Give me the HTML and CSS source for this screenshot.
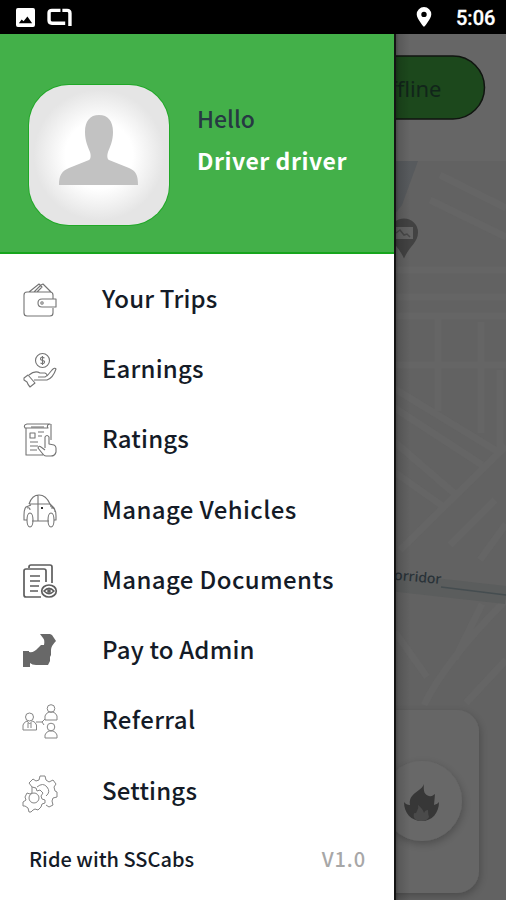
FILE: index.html
```html
<!DOCTYPE html>
<html lang="en">
<head>
<meta charset="utf-8">
<title>SSCabs</title>
<link rel="stylesheet" href="styles.css">
</head>
<body>
<header class="status">
  <svg class="photo" viewBox="0 0 20 20"><path fill="#fff" fill-rule="evenodd" d="M2 0h16q2 0 2 2v16q0 2-2 2H2q-2 0-2-2V2Q0 0 2 0ZM3 16h14l-5-7-4 5-2-2Z"/></svg>
  <svg class="cast" viewBox="0 0 26 20"><path fill="none" stroke="#fff" stroke-width="3.6" d="M14 2.500H5Q2 2.500 2 5v8q0 3 3 3h14M16 2.500h5q3 0 3 3V19"/></svg>
  <svg class="pin" viewBox="0 0 16 20"><path fill="#fff" fill-rule="evenodd" d="M8 0a7.3 7.3 0 0 1 7.3 7.3C15.3 12 8 20 8 20S.7 12 .7 7.3A7.3 7.3 0 0 1 8 0Zm0 4.7a2.7 2.7 0 1 0 0 5.4 2.7 2.7 0 0 0 0-5.4Z"/></svg>
  <time class="time">5:06</time>
</header>
<main class="screen">
  <svg class="map" viewBox="0 34 506 866">
    <defs>
      <filter id="soft" x="-30%" y="-30%" width="160%" height="160%"><feDropShadow dx="1" dy="3" stdDeviation="4" flood-opacity=".25"/></filter>
      <linearGradient id="edge"><stop stop-opacity=".4"/><stop offset=".3" stop-opacity=".13"/><stop offset="1" stop-opacity="0"/></linearGradient>
    </defs>
    <path fill="#626262" d="M390 34h116v866H390Z"/>
    <path fill="#666" d="M390 34h116v127H390Z"/>
    <path fill="#575a5d" d="M390 161h28l-16 44-12 15Z"/>
    <g fill="none" stroke="#656565" stroke-width="7">
      <path d="M390 270h116M390 297h116M390 316h116M390 365h116M438 316v95M481 322v111M500 370v80M440 175l66 33M430 200l76 37M390 386l110 67M390 405l92 60M390 438l65 56M390 469l54 38M400 550l106-104M480 560l26-36M506 600q-60 60-82 105M506 660l-40 43M395 632l32 45M482 604l-27 55M450 545l45-45"/>
    </g>
    <path fill="none" stroke="#5b5d5d" stroke-width="18" d="M390 582l116 13"/>
    <path fill="none" stroke="#454d50" stroke-width="1.3" d="M441 587l65 8"/>
    <text class="road" transform="translate(385 579) rotate(5)">Corridor</text>
    <rect x="280" y="56" width="204.500" height="63" rx="31.500" fill="#1c481c" stroke="#101510" stroke-width="1.500"/>
    <text class="offline" x="372" y="97" textLength="69.500">Offline</text>
    <path fill="#424242" d="M404 218.500a14 14 0 0 1 14 14c0 10-9 14-14 26-5-12-14-16-14-26a14 14 0 0 1 14-14Z"/>
    <path fill="#636363" d="M392 227h21v12h-21Z"/><path fill="none" stroke="#484848" stroke-width="1.500" d="M396 233l4-3 4 5 3-1 3 3"/>
    <rect x="330" y="710" width="149" height="183" rx="22" fill="#666" filter="url(#soft)"/>
    <circle cx="422" cy="801" r="40" fill="#686868" filter="url(#soft)"/>
    <path fill="#373737" d="M424 784c-1 8 1 11 5 12 3 1 4-1 6-2l-1 11q4-1 5-3c0 11-7 19-17 19-11 0-18-8-18-19q2 3 6 3c-2-12 11-13 14-21Z"/>
    <path fill="#4a4a4a" d="M422 821q-10 0-8-8 2 1 3-2 2-3 1-6 5 4 6 8 1-3 4-3 0 4 1 7-2 4-7 4Z"/>
    <rect x="394" y="34" width="16" height="866" fill="url(#edge)"/>
    <path fill="#141414" d="M394 34h2v866h-2Z"/>
  </svg>
  <aside class="drawer">
    <section class="profile">
      <div class="avatar">
        <svg viewBox="0 0 80 70"><path fill="#c2c2c2" d="M40 0c9 0 14 6 14 17 0 9-3 15-5 20-1 3-1 7 1 8l20 8c7 3 9 7 9 17H0c0-10 3-14 10-17l20-8c2-1 2-5 1-8-2-5-5-11-5-20C26 6 31 0 40 0Z"/></svg>
      </div>
      <div class="who"><div class="hello"><span>Hello</span></div><div class="name"><span>Driver driver</span></div></div>
    </section>
    <nav class="menu">
      <a class="item"><svg viewBox="0 0 34 34"><path d="M30 16v-4q0-3-3-3H4q-3 0-3 3v18q0 3 3 3h23q3 0 3-3v-5M6 9 16 1l3 3-5 5M11 9l7-7 2-1 8 8M19 16h14v8H19q-4 0-4-4t4-4Z"/><circle cx="19" cy="20" r="1.200"/></svg><span>Your Trips</span></a>
      <a class="item"><svg viewBox="0 0 34 34"><circle cx="19.500" cy="7.500" r="7"/><path d="M21.500 5q-4-2-4 1 0 1 2 1.500 2.500.5 2 2-1 2-4 .5M19.500 3v9M1 25l4-3 7 8-5 4q-2-2-3-5l-3-2ZM6 22q6-5 11-2h5q4 2 0 4h-7M24 23l5-6q3-3 4-1-3 9-9 11H11"/></svg><span>Earnings</span></a>
      <a class="item"><svg viewBox="0 0 34 34"><path d="M5 5H2Q0 2 4 1h23q-4 1-2 4H5M3 5v27h17M28 1v16M7 10h5v5H7ZM15 9h6M15 13h4M7 19h8M7 23h8M7 27h7M22 25V14q2-3 4 0v7l5 1q2 1 2 3v4q-1 4-5 4h-5q-2 0-4-3l-4-5q1-3 3-1l4 3"/><path d="M8 4h13"/></svg><span>Ratings</span></a>
      <a class="item wide"><svg viewBox="0 0 34 34"><path d="M6 10q3-9 10-9t11 9l4 4q2 3 2 8v4h-2M15 1v26M6 10h20q2 0 2 3M8 11l-5 2q-2 2-2 8v5h3M9 27h17M4 14q3-1 3 2M28 14q4-1 4 4"/><ellipse cx="7" cy="26" rx="3" ry="7"/><ellipse cx="28" cy="26" rx="3" ry="7"/><path class="dot" d="M18 14h2"/></svg><span>Manage Vehicles</span></a>
      <a class="item strong wide"><svg viewBox="0 0 34 34"><path d="M6 4V3q0-2 2-2h19q2 0 2 2v16M18 33H3q-2 0-2-2V7q0-2 2-2h18q2 0 2 2v11M7 12h10M7 17h10M7 22h9M7 27h8"/><ellipse cx="26" cy="27" rx="7.300" ry="6"/><path d="M21 27q5-5 10 0-5 5-10 0Z"/><circle cx="26" cy="27" r="1"/></svg><span>Manage Documents</span></a>
      <a class="item solid"><svg viewBox="0 0 34 34"><path d="M17 0h10l2 1 4 6q-5 5-5 9v5l-1 2v4l-1 2-1 2H13q-4 0-6-2v4H0V17h6v1q5 1 9-4l3-3h3q1-5-1-7Z"/></svg><span>Pay to Admin</span></a>
      <a class="item thin wide"><svg viewBox="0 0 34 34"><circle cx="6.500" cy="13" r="4"/><path d="M0 26v-5q1-3 4-4l2.500 3 3-3q3 1 4 4v5Zm5-7v5m3-5v5"/><circle cx="28" cy="4.500" r="3.800"/><path d="M22 16v-4q1-3 4-4h4q3 1 4 4v4Z"/><circle cx="28" cy="23" r="3.800"/><path d="M22 34v-3q1-3 4-4h4q3 1 4 4v3ZM13 18h6l3-3M19 18l2 3"/></svg><span>Referral</span></a>
      <a class="item thin"><svg viewBox="0 0 34 34"><path d="m6 8 4-4 3 2 3-1 1-4h5l1 4 3 2 4-2 3 4-2 3 1 4 2 1v5l-4 1-1 3 1 4-4 2-3-2M6 8l3 4M14 12q6-5 10 0 4 5-1 9"/><path d="m9 12 4 1 1 3 3-1 3 3-2 3 1 3 3 1v3l-3 1-1 3-3 3-3-1-2 1-2 2H6l-1-4-3-2-2 0v-4l3-2-1-3 2-4 3 1 2-1Z"/><circle cx="11" cy="23" r="5"/></svg><span>Settings</span></a>
    </nav>
    <footer class="foot"><span class="ride">Ride with SSCabs</span><span class="version">V1.0</span></footer>
  </aside>
</main>
</body>
</html>
```

FILE: styles.css
```css
* { box-sizing: border-box; }
body { margin: 0; width: 506px; height: 900px; overflow: hidden; background: #636363; font-family: "Noto Sans CJK SC", "Noto Sans", sans-serif; }
svg { display: block; flex: none; }
.status { height: 34px; background: #000; display: flex; align-items: center; padding: 0 11px 0 16px; color: #fff; }
.photo { width: 19px; height: 19px; }
.cast { width: 25px; height: 19px; margin-left: 12px; }
.pin { width: 16px; height: 20px; margin-left: auto; margin-right: 24px; }
.time { font: 500 20px/34px Roboto, sans-serif; width: 39px; white-space: nowrap; padding-top: 2px; -webkit-text-stroke: .3px #fff; }
.screen { position: relative; height: 866px; }
.map { width: 506px; height: 866px; }
.road { font: 500 14px "Noto Sans", sans-serif; fill: #293238; }
.offline { font: 400 22px "Noto Sans", sans-serif; fill: #11251a; }
.drawer { position: absolute; inset: 0 auto 0 0; width: 394px; background: #fff; display: flex; flex-direction: column; }
.profile { height: 220px; background: #43b049; border-bottom: 2px solid #16a51d; display: flex; padding: 51px 0 0 29px; }
.avatar { width: 140px; height: 140px; border-radius: 40px; background: radial-gradient(circle, #fff 34%, #e5e5e5 66%); box-shadow: 0 0 0 1px #20a827; display: flex; justify-content: center; padding-top: 30px; }
.avatar svg { width: 80px; height: 70px; }
.who { margin: 17px 0 0 28px; font-size: 23px; font-weight: 500; white-space: nowrap; }
.hello { color: #263943; height: 42px; line-height: 32px; }
.name { color: #fff; line-height: 32px; font-weight: 700; letter-spacing: .5px; }
.menu { display: flex; flex-direction: column; padding-top: 10.5px; }
.item { height: 70.3px; display: flex; align-items: center; padding-left: 23px; gap: 45px; font-size: 24px; font-weight: 500; letter-spacing: .18px; color: #141b27; white-space: nowrap; }
.item span { padding-bottom: 5px; }
.item.wide { letter-spacing: .38px; }
.item svg { width: 34px; height: 34px; fill: none; stroke: #747474; stroke-width: 1.1; overflow: visible; stroke-linejoin: round; }
.item.strong svg { stroke: #5d5d5d; stroke-width: 1.7; }
.item.thin svg { stroke: #858585; stroke-width: 1; }
.item.solid svg { fill: #686868; stroke: none; }
.item .dot { stroke: #333; stroke-width: 2; }
.foot { height: 50px; display: flex; justify-content: space-between; align-items: center; padding: 0 28px 0 29px; font-size: 20px; font-weight: 500; color: #141b27; margin-top: 6.5px; }
.version { color: #a7a7a7; letter-spacing: .9px; }
```
